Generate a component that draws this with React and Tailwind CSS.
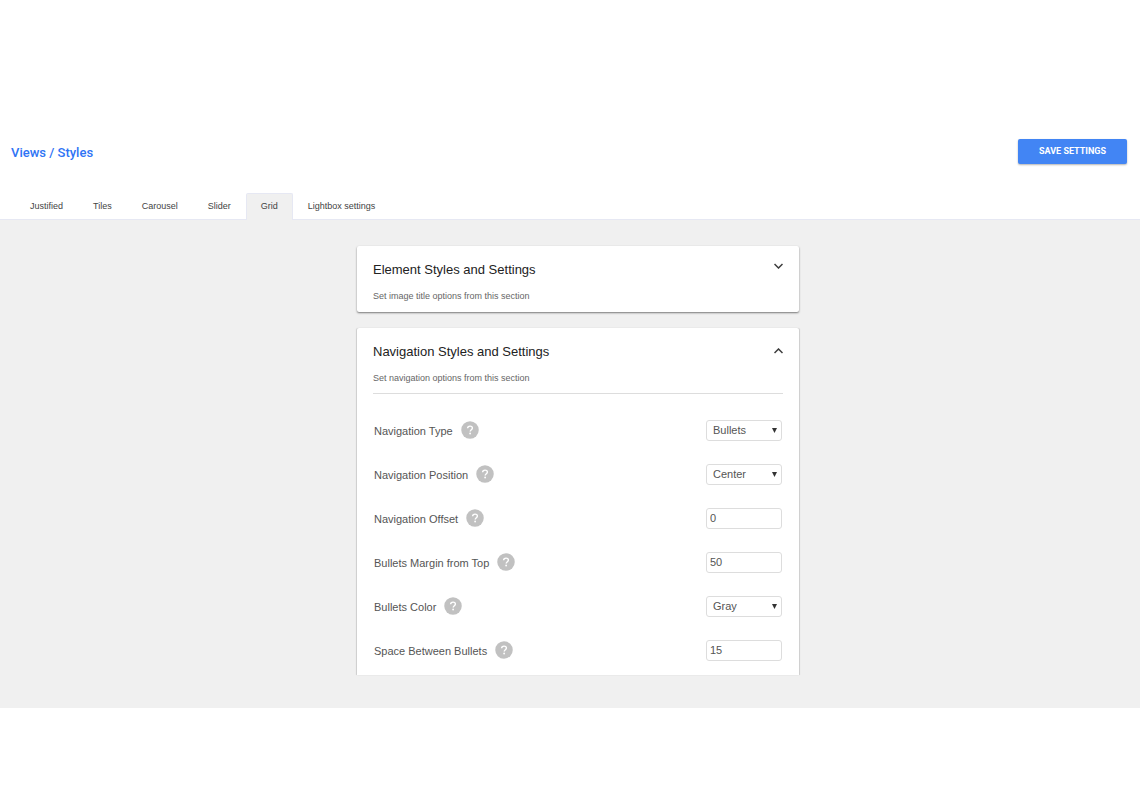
import { useState } from 'react'

const TABS = ['Justified', 'Tiles', 'Carousel', 'Slider', 'Grid', 'Lightbox settings']

const NAVIGATION_FIELDS = [
  { id: 'nav-type', label: 'Navigation Type', value: 'Bullets', options: ['Bullets', 'Thumbnails'] },
  { id: 'nav-position', label: 'Navigation Position', value: 'Center', options: ['Left', 'Center', 'Right'] },
  { id: 'nav-offset', label: 'Navigation Offset', value: '0' },
  { id: 'bullets-margin', label: 'Bullets Margin from Top', value: '50' },
  { id: 'bullets-color', label: 'Bullets Color', value: 'Gray', options: ['Gray', 'Blue', 'Green'] },
  { id: 'bullets-space', label: 'Space Between Bullets', value: '15' },
]

function Chevron({ up }) {
  return (
    <svg width="9" height="6" viewBox="0 0 9 6" fill="none" stroke="#3c3c3c" strokeWidth="1.5">
      <path d={up ? 'M.5 5l4-4 4 4' : 'M.5 1l4 4 4-4'} />
    </svg>
  )
}

function HelpButton({ label }) {
  return (
    <button type="button" aria-label={`Help: ${label}`} className="size-[18px] shrink-0">
      <svg width="18" height="18" viewBox="0 0 18 18" fill="none">
        <circle cx="9" cy="9" r="8.75" fill="#c1c1c1" />
        <path d="M6.6 7.3c.1-1.4 1.1-2.2 2.4-2.2 1.4 0 2.4.8 2.4 2 0 1.7-2.2 1.7-2.200 3.500" stroke="#fff" strokeWidth="1.4" />
        <circle cx="9.1" cy="12.500" r=".9" fill="#fff" />
      </svg>
    </button>
  )
}

function Field({ field }) {
  const { id, label, value, options } = field
  return (
    <div className="flex h-11 items-center justify-between">
      <div className="flex items-center gap-2">
        <label htmlFor={id} className="pt-px text-[11px] leading-4 text-[#555]">{label}</label>
        <HelpButton label={label} />
      </div>
      {options ? (
        <div className="relative h-[21px] w-19">
          <select id={id} defaultValue={value} className="block h-full w-full appearance-none rounded-[3px] border border-[#ddd] bg-white pl-1.5 text-[11px] leading-4 text-[#555]">
            {options.map((option) => <option key={option}>{option}</option>)}
          </select>
          <svg className="pointer-events-none absolute top-2 right-[5px]" width="5" height="5" viewBox="0 0 5 5" fill="#333">
            <path d="M0 0h5L2.500 5z" />
          </svg>
        </div>
      ) : (
        <input id={id} type="text" defaultValue={value} className="h-[21px] w-19 rounded-[3px] border border-[#ddd] bg-white pl-[3px] text-[11px] leading-4 text-[#555]" />
      )}
    </div>
  )
}

function SectionHeader({ title, text, open }) {
  return (
    <div className="flex items-start justify-between">
      <div>
        <h2 className="text-[13px] leading-5 text-[#222]">{title}</h2>
        <p className="mt-2 text-[9px] leading-4 text-[#666]">{text}</p>
      </div>
      <button type="button" aria-label={title} aria-expanded={open} className={open ? 'pt-1.5' : 'pt-[3px]'}>
        <Chevron up={open} />
      </button>
    </div>
  )
}

export default function App() {
  const [activeTab, setActiveTab] = useState('Grid')

  return (
    <div className="min-h-screen bg-white pt-[139px] font-['Liberation_Sans',Arial,sans-serif]">
      <header className="flex items-start justify-between pr-[13px] pl-[11px]">
        <h1 className="pt-1 font-[Roboto,sans-serif] text-[13px] leading-5 font-medium text-[#2f74f5]">Views / Styles</h1>
        <button type="button" className="h-[25px] w-[109px] rounded-[2px] bg-[#4285f4] pb-px font-[Roboto,sans-serif] text-[9px] leading-4 font-bold text-white shadow-[0_1px_2px_rgba(0,0,0,0.3)]">
          SAVE SETTINGS
        </button>
      </header>

      <nav className="mt-[29px] flex border-b border-[#e6e8f3] pl-[15px]">
        {TABS.map((tab) => (
          <button
            key={tab}
            type="button"
            onClick={() => setActiveTab(tab)}
            className={`-mb-px h-[27px] rounded-t-[2px] border border-b-0 px-3.5 pb-0.5 text-[9px] leading-4 text-[#444] ${tab === activeTab ? 'border-[#e6e8f3] bg-[#f0f0f0]' : 'border-transparent'}`}
          >
            {tab}
          </button>
        ))}
      </nav>

      <main className="bg-[#f0f0f0] pt-[26px] pb-[33px] pl-4">
        <div className="mx-auto max-w-[442px]">
          <section className="rounded-[2px] bg-white px-4 pt-3.5 pb-2 shadow-[0_1px_2px_rgba(0,0,0,0.5)]">
            <SectionHeader title="Element Styles and Settings" text="Set image title options from this section" />
          </section>
          <section className="mt-4 rounded-t-[2px] bg-white px-4 pt-3.5 pb-[3px] shadow-[1px_0_1px_rgba(0,0,0,0.15),-1px_0_1px_rgba(0,0,0,0.15)]">
            <SectionHeader title="Navigation Styles and Settings" text="Set navigation options from this section" open />
            <div className="mt-[7px] border-t border-[#ddd] px-px pt-3.5">
              {NAVIGATION_FIELDS.map((field) => <Field key={field.id} field={field} />)}
            </div>
          </section>
        </div>
      </main>
    </div>
  )
}
